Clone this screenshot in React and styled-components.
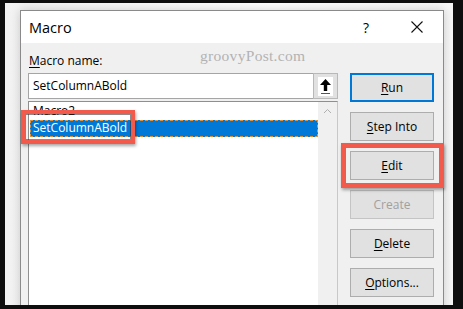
import React from "react";
import styled, { createGlobalStyle } from "styled-components";

const Global = createGlobalStyle`
  html, body { margin: 0; padding: 0; background: #0e0e0e; }
  * { box-sizing: border-box; }
`;

const Frame = styled.div`
  width: 463px;
  height: 309px;
  padding: 3px 10px 4px 5px;
  display: flex;
  background: #0e0e0e;
`;

const Sheet = styled.div`
  position: relative;
  flex: 1;
  overflow: hidden;
  padding: 7px 0 0 15px;
  background:
    repeating-linear-gradient(
      to bottom,
      transparent 0px,
      transparent 29px,
      #d4d4d4 29px,
      #d4d4d4 30px,
      transparent 30px,
      transparent 51px
    ),
    linear-gradient(to right, #f3f3f3, #ffffff 60%, #f6f6f6);
  background-size: 100% 21.7px, 100% 100%;
  background-position: 0 8px, 0 0;
`;

const Dialog = styled.div`
  width: 424px;
  height: 320px;
  border: 1px solid #8a8a8a;
  background: #f0f0f0;
  display: flex;
  flex-direction: column;
  box-shadow: 0 0 10px rgba(0, 0, 0, 0.18);
  font-family: "Open Sans", "Noto Sans", sans-serif;
  color: #000;
`;

const TitleBar = styled.div`
  height: 32px;
  background: #fff;
  display: flex;
  align-items: center;
  padding-left: 8px;
  padding-right: 20px;
`;

const Title = styled.div`
  flex: 1;
  font-size: 14.5px;
  padding-top: 1px;
`;

const Help = styled.div`
  font-size: 14px;
  width: 14px;
  margin-right: 38px;
  text-align: center;
`;

const Body = styled.div`
  flex: 1;
  padding: 10px 8px 0 7px;
  display: flex;
  flex-direction: column;
`;

const Label = styled.div`
  font-size: 12px;
  line-height: 16px;
  height: 16px;
  padding-left: 1px;
`;

const U = styled.span`
  text-decoration: underline;
  text-underline-offset: 2px;
`;

const Watermark = styled.div`
  position: absolute;
  left: 195px;
  top: 44px;
  font-family: "Liberation Serif", serif;
  font-size: 15.5px;
  color: #b3b3b3;
  letter-spacing: 0.3px;
`;

const Content = styled.div`
  margin-top: 4px;
  display: flex;
  gap: 12px;
  flex: 1;
`;

const LeftCol = styled.div`
  width: 310px;
  display: flex;
  flex-direction: column;
`;

const InputRow = styled.div`
  display: flex;
  height: 26px;
`;

const Input = styled.div`
  width: 285px;
  border: 1px solid #a5a5a5;
  border-right: none;
  background: #fff;
  font-size: 12px;
  line-height: 23px;
  padding-left: 4px;
`;

const ArrowBtn = styled.div`
  width: 25px;
  background: #e1e1e1;
  border: 1px solid #b8b8b8;
  display: flex;
  align-items: center;
  justify-content: center;
`;

const ArrowInner = styled.div`
  width: 15px;
  height: 19px;
  background: #fff;
  display: flex;
  align-items: center;
  justify-content: center;
`;

const List = styled.div`
  margin-top: 2px;
  flex: 1;
  border: 1px solid #8f8f8f;
  border-right-color: #c8c8c8;
  background: #fff;
  display: flex;
`;

const Items = styled.div`
  flex: 1;
  padding: 1px 0 0 1px;
  display: flex;
  flex-direction: column;
`;

const Item = styled.div`
  height: 17px;
  font-size: 12px;
  line-height: 16px;
  padding-left: 3px;
  background: ${(p) => (p.$selected ? "#0078d7" : "transparent")};
  color: ${(p) => (p.$selected ? "#fff" : "#000")};
  outline: ${(p) => (p.$selected ? "1px dashed #e0913a" : "none")};
  outline-offset: -1px;
`;

const Scrollbar = styled.div`
  width: 19px;
  background: #f0f0f0;
  display: flex;
  flex-direction: column;
  justify-content: space-between;
  align-items: center;
  padding: 6px 0 6px;
`;

const ButtonCol = styled.div`
  width: 84px;
  display: flex;
  flex-direction: column;
  gap: 10px;
`;

const Button = styled.div`
  height: 29px;
  background: #e1e1e1;
  border: 1px solid ${(p) => (p.$default ? "#0078d7" : "#adadad")};
  box-shadow: ${(p) => (p.$default ? "inset 0 0 0 1px #0078d7" : "none")};
  color: ${(p) => (p.$disabled ? "#a0a0a0" : "#000")};
  border-color: ${(p) => (p.$disabled ? "#c4c4c4" : p.$default ? "#0078d7" : "#adadad")};
  font-size: 12px;
  display: flex;
  align-items: center;
  justify-content: center;
`;

const Highlight = styled.div`
  position: absolute;
  left: ${(p) => p.$x}px;
  top: ${(p) => p.$y}px;
  width: ${(p) => p.$w}px;
  height: ${(p) => p.$h}px;
  border: 4px solid #f25a4c;
  box-shadow: inset 0 0 0 1px rgba(60, 40, 40, 0.55), 1px 2px 3px rgba(0, 0, 0, 0.35);
`;

const Chevron = ({ up }) => (
  <svg width="9" height="6" viewBox="0 0 9 6">
    <path
      d={up ? "M1 5 L4.5 1.5 L8 5" : "M1 1 L4.5 4.5 L8 1"}
      fill="none"
      stroke="#b0b0b0"
      strokeWidth="1"
    />
  </svg>
);

export default function App() {
  return (
    <>
      <Global />
      <Frame>
        <Sheet>
          <Dialog>
            <TitleBar>
              <Title>Macro</Title>
              <Help>?</Help>
              <svg width="12" height="12" viewBox="0 0 12 12">
                <path d="M0.5 0.5 L11.5 11.5 M11.5 0.5 L0.5 11.5" stroke="#111" strokeWidth="1.1" />
              </svg>
            </TitleBar>
            <Body>
              <Label>
                <U>M</U>acro name:
              </Label>
              <Content>
                <LeftCol>
                  <InputRow>
                    <Input>SetColumnABold</Input>
                    <ArrowBtn>
                      <ArrowInner>
                        <svg width="13" height="17" viewBox="0 0 13 17">
                          <path d="M6.5 1 L1 7 L4.8 7 L4.8 13 L8.2 13 L8.2 7 L12 7 Z" fill="#000" />
                          <rect x="2" y="15" width="9" height="1" fill="#555" />
                        </svg>
                      </ArrowInner>
                    </ArrowBtn>
                  </InputRow>
                  <List>
                    <Items>
                      <Item>Macro2</Item>
                      <Item $selected>SetColumnABold</Item>
                    </Items>
                    <Scrollbar>
                      <Chevron up />
                      <Chevron />
                    </Scrollbar>
                  </List>
                </LeftCol>
                <ButtonCol>
                  <Button $default>
                    <span><U>R</U>un</span>
                  </Button>
                  <Button>
                    <span><U>S</U>tep Into</span>
                  </Button>
                  <Button>
                    <span><U>E</U>dit</span>
                  </Button>
                  <Button $disabled>Create</Button>
                  <Button>
                    <span><U>D</U>elete</span>
                  </Button>
                  <Button>
                    <span><U>O</U>ptions...</span>
                  </Button>
                </ButtonCol>
              </Content>
            </Body>
          </Dialog>
          <Watermark>groovyPost.com</Watermark>
          <Highlight $x={16} $y={107} $w={114} $h={34} />
          <Highlight $x={336} $y={140} $w={103} $h={45} />
        </Sheet>
      </Frame>
    </>
  );
}
